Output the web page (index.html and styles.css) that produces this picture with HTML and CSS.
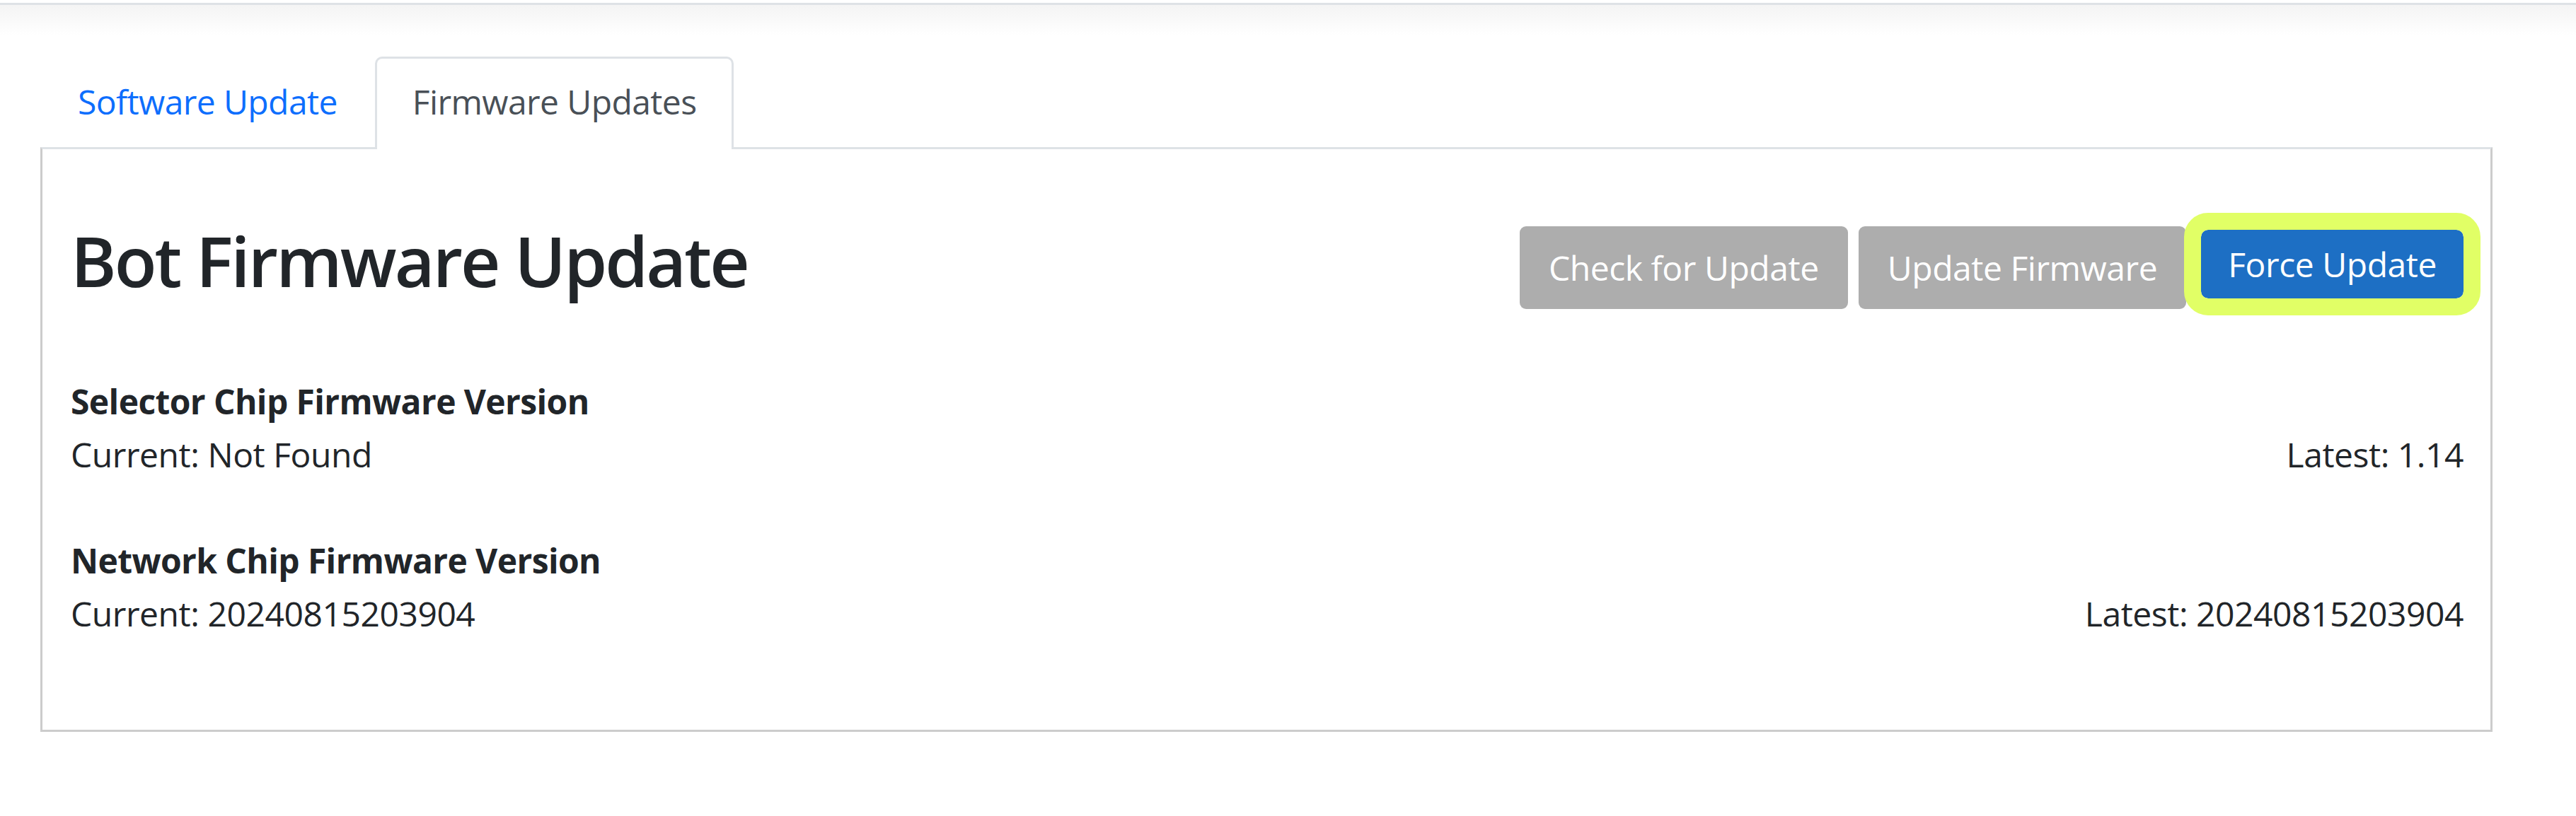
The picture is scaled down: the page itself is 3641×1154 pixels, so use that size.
FILE: index.html
```html
<!DOCTYPE html>
<html lang="en">
<head>
    <meta charset="UTF-8">
    <meta name="viewport" content="width=device-width, initial-scale=1.0">
    <title>Bot Firmware Update</title>
    <link rel="stylesheet" href="styles.css">
</head>
<body>
    <div class="topbar"></div>
    <div class="page">
        <ul class="tabs">
            <li><a class="tab" href="#">Software Update</a></li>
            <li><a class="tab active" href="#">Firmware Updates</a></li>
        </ul>
        <div class="panel">
            <div class="panel-head">
                <h2>Bot Firmware Update</h2>
                <div class="actions">
                    <button class="btn btn-gray" disabled>Check for Update</button>
                    <button class="btn btn-gray" disabled>Update Firmware</button>
                    <button class="btn btn-blue">Force Update</button>
                </div>
            </div>
            <div class="chip">
                <div class="chip-title">Selector Chip Firmware Version</div>
                <div class="chip-row">
                    <span>Current: Not Found</span>
                    <span>Latest: 1.14</span>
                </div>
            </div>
            <div class="chip">
                <div class="chip-title">Network Chip Firmware Version</div>
                <div class="chip-row">
                    <span>Current: 20240815203904</span>
                    <span>Latest: 20240815203904</span>
                </div>
            </div>
        </div>
    </div>
</body>
</html>
```

FILE: styles.css
```css
body {
    font-family: "Open Sans", "Noto Sans", sans-serif;
    font-size: 48px;
    letter-spacing: -0.45px;
    color: #212529;
    background-color: #fff;
    margin: 0;
}
.topbar {
    margin-top: 4px;
    height: 43px;
    border-top: 3px solid #dee2e6;
    background: linear-gradient(#f4f4f4, #fff);
}
.page {
    padding: 30px 118px 60px 57px;
}
.tabs {
    display: flex;
    list-style: none;
    margin: 0 0 -3px;
    padding: 0;
    position: relative;
    z-index: 1;
}
.tab {
    display: block;
    padding: 25px 50px 31px;
    line-height: 72px;
    letter-spacing: -0.6px;
    border: 3px solid transparent;
    border-bottom: 0;
    border-radius: 10px 10px 0 0;
    color: #0d6efd;
    text-decoration: none;
}
.tab.active {
    color: #495057;
    background-color: #fff;
    border-color: #dee2e6;
}
.panel {
    border: 3px solid #ccc;
    border-top-color: #dee2e6;
    padding: 40px 38px 127px 40px;
}
.panel-head {
    display: flex;
    justify-content: space-between;
    align-items: flex-start;
    margin-top: 69px;
}
h2 {
    margin: 0;
    font-size: 98px;
    font-weight: 600;
    letter-spacing: -2.9px;
    line-height: 96px;
}
.actions {
    display: flex;
    align-items: center;
    gap: 15px;
}
.btn {
    font-family: inherit;
    font-size: 48px;
    letter-spacing: -0.45px;
    color: #fff;
    border: none;
    border-radius: 9px;
    height: 117px;
    padding: 0 41px;
}
.btn-gray {
    background-color: #adadad;
}
.btn-blue {
    background-color: #1d6fc4;
    height: 97px;
    padding: 0 38px;
    border-radius: 10px;
    outline: 24px solid #e1ff66;
    margin: 0 0 10px 6px;
    cursor: pointer;
}
.chip {
    margin-top: 93px;
}
.chip + .chip {
    margin-top: 75px;
}
.chip-title {
    font-weight: 700;
    letter-spacing: -0.6px;
    line-height: 75px;
}
.chip-row {
    display: flex;
    justify-content: space-between;
    line-height: 75px;
}
```
